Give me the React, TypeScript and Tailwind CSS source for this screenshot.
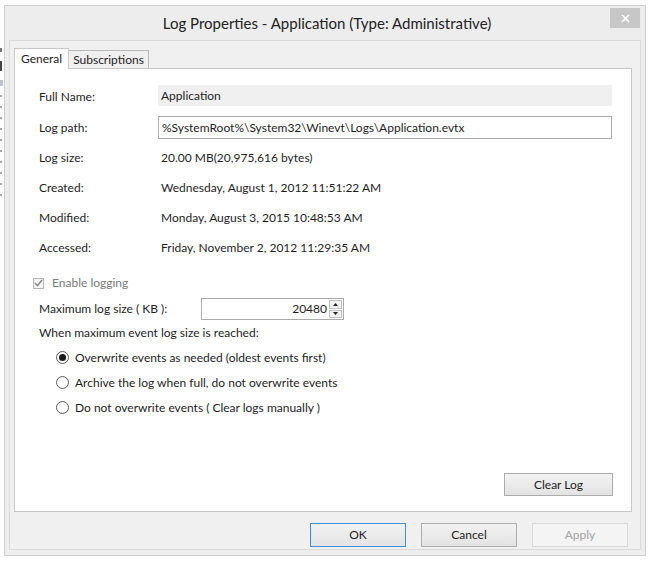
import React from 'react';

const rows = [
  { label: 'Log size:', value: '20.00 MB(20,975,616 bytes)' },
  { label: 'Created:', value: 'Wednesday, August 1, 2012 11:51:22 AM' },
  { label: 'Modified:', value: 'Monday, August 3, 2015 10:48:53 AM' },
  { label: 'Accessed:', value: 'Friday, November 2, 2012 11:29:35 AM' },
];

const radios = [
  { label: 'Overwrite events as needed (oldest events first)', checked: true },
  { label: 'Archive the log when full, do not overwrite events', checked: false },
  { label: 'Do not overwrite events ( Clear logs manually )', checked: false },
];

function Radio({ checked }: { checked: boolean }) {
  return (
    <span className="w-[13px] h-[13px] rounded-full border border-[#5a5a5a] bg-white flex items-center justify-center">
      {checked && <span className="w-[7px] h-[7px] rounded-full bg-[#1a1a1a]" />}
    </span>
  );
}

export default function App() {
  return (
    <div
      className="w-[651px] h-[565px] bg-white overflow-hidden flex text-[#1e1e1e]"
      style={{ fontFamily: 'Lato, "Liberation Sans", sans-serif' }}
    >
      {/* bit of the window behind */}
      <div className="w-[4px] flex flex-col gap-[9px] pt-[48px] items-start">
        <span className="w-[2px] h-[4px] bg-[#777]" />
        <span className="w-[2px] h-[10px] bg-[#444]" />
        <span className="w-[3px] h-[6px] bg-[#b8c4d0]" />
        <span className="w-[2px] h-[2px] bg-[#aaa]" />
        <span className="w-[2px] h-[2px] bg-[#aaa]" />
        <span className="w-[2px] h-[2px] bg-[#aaa]" />
        <span className="w-[2px] h-[2px] bg-[#aaa]" />
        <span className="w-[2px] h-[2px] bg-[#aaa]" />
        <span className="w-[2px] h-[2px] bg-[#aaa]" />
        <span className="w-[2px] h-[2px] bg-[#aaa]" />
        <span className="w-[2px] h-[2px] bg-[#aaa]" />
        <span className="w-[2px] h-[2px] bg-[#aaa]" />
        <span className="w-[2px] h-[2px] bg-[#aaa]" />
      </div>

      {/* dialog */}
      <div className="mt-[5px] w-[642px] h-[551px] border border-[#cfcfcf] bg-[#ededed] flex flex-col">
        {/* title bar */}
        <div className="h-[34px] relative flex items-center justify-center">
          <span className="text-[15px] text-[#222] pt-[1px] pl-[4px]">Log Properties - Application (Type: Administrative)</span>
          <div className="absolute right-[5px] top-[2px] w-[30px] h-[20px] bg-[#c7c7c7] flex items-center justify-center">
            <svg width="9" height="9" viewBox="0 0 9 9">
              <path d="M1 1 L8 8 M8 1 L1 8" stroke="#fff" strokeWidth="1.6" />
            </svg>
          </div>
        </div>

        <div className="flex-1 flex flex-col mx-[4px] mb-[5px] border border-[#dadada] bg-[#f0f0f0] pl-[4px] pr-[8px] pt-[6px]">
          {/* tabs */}
          <div className="flex items-end h-[21px] text-[12px]">
            <div className="h-[21px] px-[6px] bg-white border border-[#c9c9c9] border-b-0 flex items-center relative z-10 -mb-[1px]">
              General
            </div>
            <div className="h-[18px] px-[4px] bg-[#f0f0f0] border border-[#b9b9b9] border-b-0 border-l-0 flex items-center">
              Subscriptions
            </div>
          </div>

          {/* tab page */}
          <div className="h-[444px] bg-white border border-[#c9c9c9] text-[12px] flex flex-col pl-[24px] pr-[19px]">
            <div className="mt-[17px] flex items-center h-[21px]">
              <span className="w-[119px]">Full Name:</span>
              <span className="flex-1 h-[21px] bg-[#f0f0f0] flex items-center pl-[3px] -mt-[2px]">Application</span>
            </div>
            <div className="mt-[9px] flex items-center h-[23px]">
              <span className="w-[119px]">Log path:</span>
              <span className="flex-1 h-[23px] border border-[#ababab] flex items-center pl-[3px]">
                %SystemRoot%\System32\Winevt\Logs\Application.evtx
              </span>
            </div>
            {rows.map((r) => (
              <div key={r.label} className="mt-[7px] flex items-center h-[23px] first:mt-[6px]">
                <span className="w-[122px]">{r.label}</span>
                <span>{r.value}</span>
              </div>
            ))}

            <div className="mt-[15px] flex items-center gap-[8px] text-[#7a7a7a] -ml-[6px]">
              <span className="w-[11px] h-[11px] border border-[#b5b5b5] bg-[#f4f4f4] flex items-center justify-center">
                <svg width="9" height="8" viewBox="0 0 9 8">
                  <path d="M1 4 L3.5 6.5 L8 1" stroke="#8a8a8a" strokeWidth="1.6" fill="none" />
                </svg>
              </span>
              Enable logging
            </div>

            <div className="mt-[6px] flex items-center">
              <span className="w-[162px]">Maximum log size ( KB ):</span>
              <div className="w-[143px] h-[22px] border border-[#ababab] flex items-center justify-end">
                <span className="pr-[2px]">20480</span>
                <div className="w-[13px] h-[18px] mr-[1px] flex flex-col gap-[1px]">
                  <span className="flex-1 border border-[#c0c0c0] bg-[#f2f2f2] flex items-center justify-center">
                    <svg width="5" height="3" viewBox="0 0 5 3"><path d="M0 3 L2.5 0 L5 3 Z" fill="#222" /></svg>
                  </span>
                  <span className="flex-1 border border-[#c0c0c0] bg-[#f2f2f2] flex items-center justify-center">
                    <svg width="5" height="3" viewBox="0 0 5 3"><path d="M0 0 L2.5 3 L5 0 Z" fill="#222" /></svg>
                  </span>
                </div>
              </div>
            </div>

            <div className="mt-[4px]">When maximum event log size is reached:</div>

            <div className="mt-[7px] flex flex-col gap-[8px] pl-[17px]">
              {radios.map((r) => (
                <div key={r.label} className="flex items-center gap-[6px] h-[17px]">
                  <Radio checked={r.checked} />
                  <span>{r.label}</span>
                </div>
              ))}
            </div>

            <div className="flex-1" />
            <div className="flex justify-end mb-[15px] pr-[-1px]">
              <button className="w-[109px] h-[23px] border border-[#acacac] bg-gradient-to-b from-[#f2f2f2] to-[#e3e3e3] text-[12px] -mr-[1px]">
                Clear Log
              </button>
            </div>
          </div>

          {/* dialog buttons */}
          <div className="flex justify-end gap-[15px] mt-[11px] pr-[4px] text-[12px]">
            <button className="w-[96px] h-[24px] border border-[#3c8ed9] bg-gradient-to-b from-[#f2f2f2] to-[#e3e3e3]">OK</button>
            <button className="w-[96px] h-[24px] border border-[#acacac] bg-gradient-to-b from-[#f2f2f2] to-[#e3e3e3]">Cancel</button>
            <button className="w-[96px] h-[24px] border border-[#d9d9d9] bg-[#f4f4f4] text-[#a3a3a3]">Apply</button>
          </div>
        </div>
      </div>
    </div>
  );
}
